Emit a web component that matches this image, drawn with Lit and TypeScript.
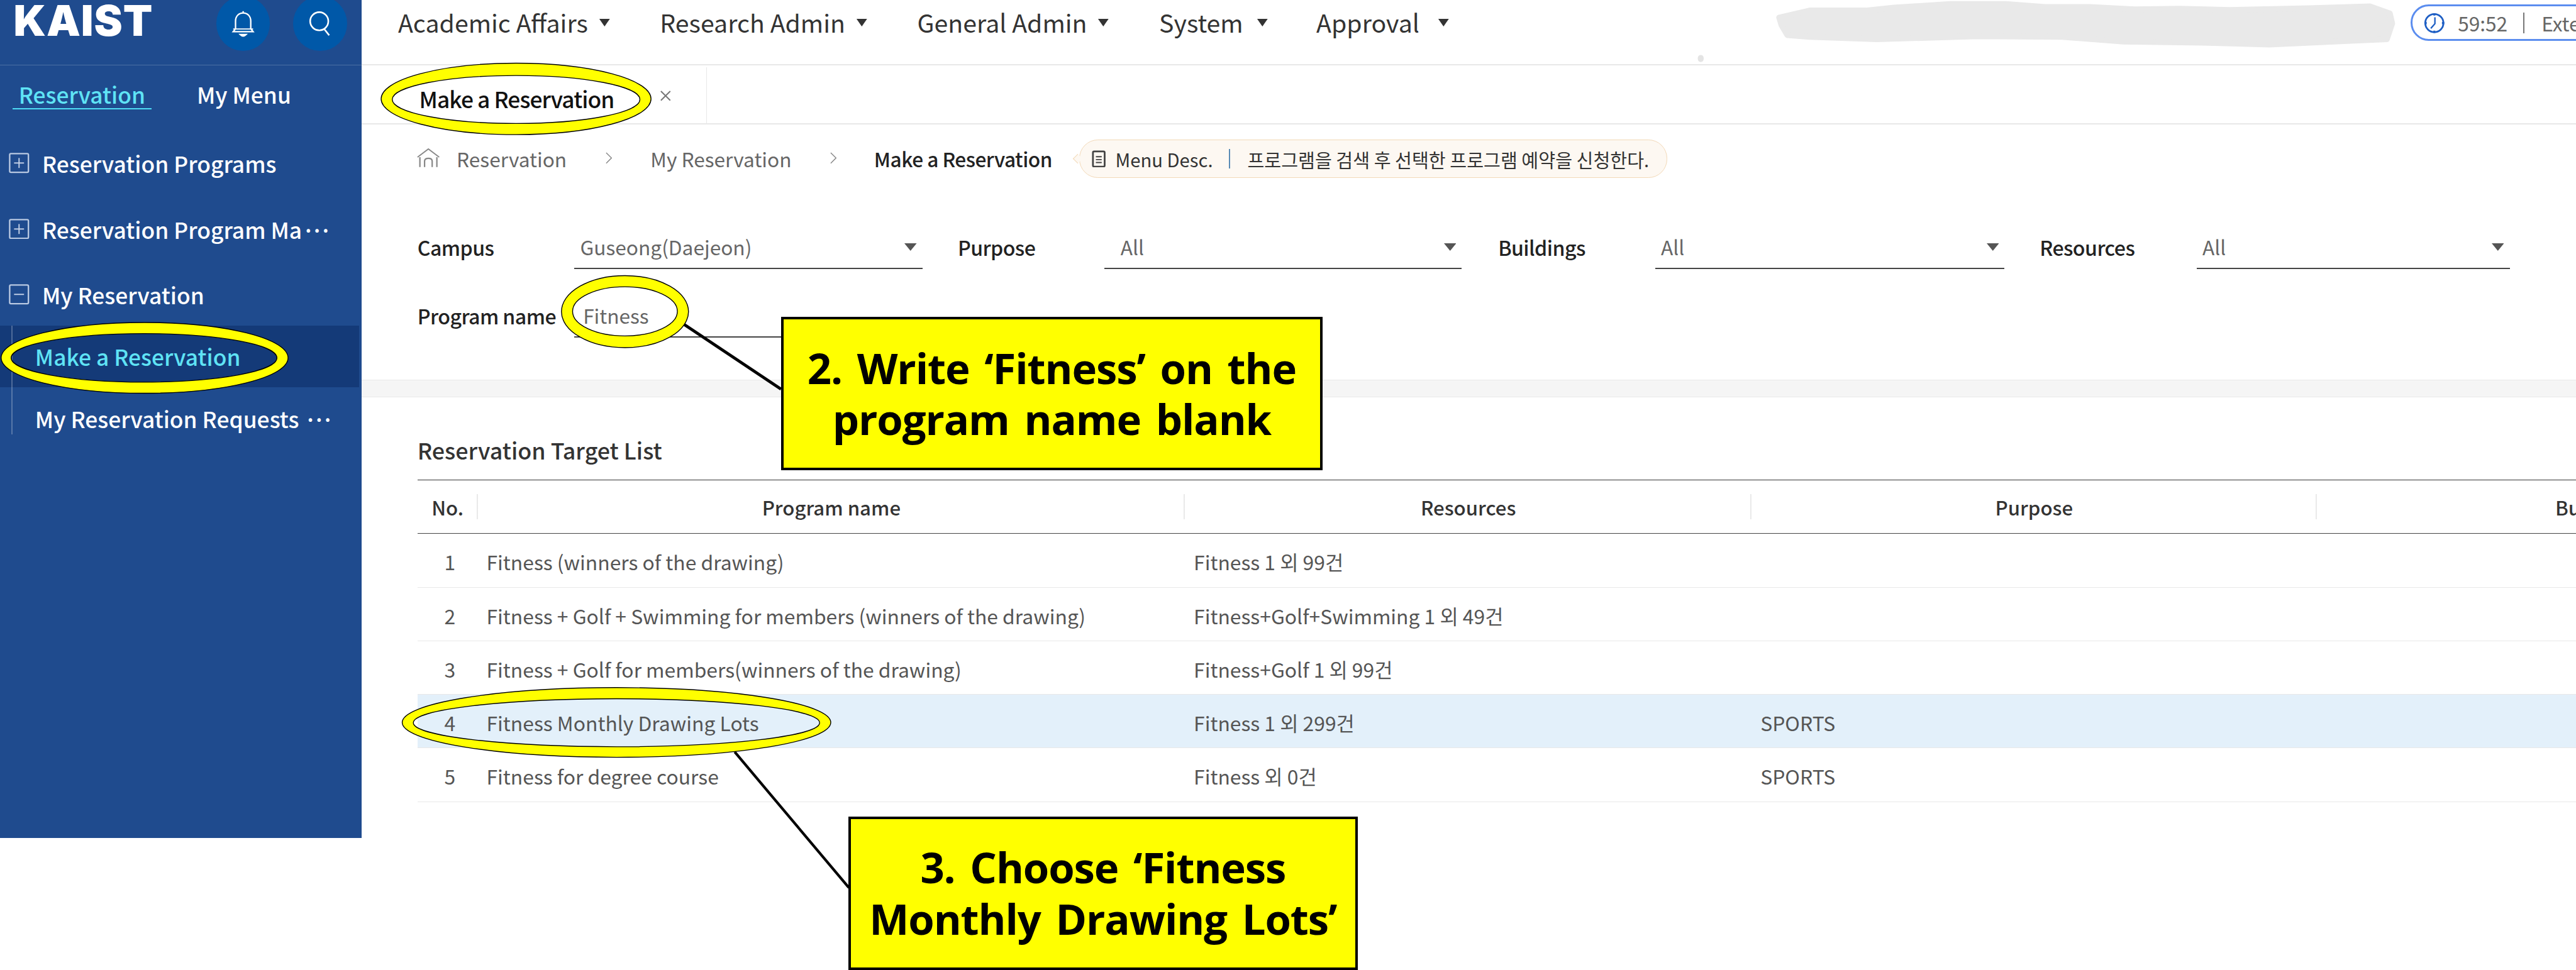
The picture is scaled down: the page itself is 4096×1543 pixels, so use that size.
import { LitElement, html, css, svg } from "lit";
import { customElement } from "lit/decorators.js";

const ring = (o: number[], i: number[]) => {
  const p = (x0: number, x1: number, y0: number, y1: number) => {
    const rx = (x1 - x0) / 2, ry = (y1 - y0) / 2, cy = (y0 + y1) / 2;
    return `M${x0} ${cy}a${rx} ${ry} 0 1 0 ${2 * rx} 0a${rx} ${ry} 0 1 0 ${-2 * rx} 0Z`;
  };
  return svg`<path class="ring" fill-rule="evenodd" d="${p(o[0], o[1], o[2], o[3])} ${p(i[0], i[1], i[2], i[3])}"></path>`;
};

const RINGS: number[][][] = [
  [[651, 1112, 108, 230], [670, 1093, 129, 211]],
  [[2, 492, 551, 672], [19, 473, 570, 653]],
  [[959, 1176, 471, 594], [978, 1157, 490, 574]],
  [[687, 1419, 1175, 1294], [706, 1400, 1194, 1276]],
];

const BLOB =
  "3039,30 3091,18 3187,18 3235,13 3331,7 3426,7 3493,12 3570,12 3646,16 3723,15 3809,17 3943,14 4048,11 4082,23 4086,40 4077,67 4010,70 3876,76 3761,73 3627,71 3522,63 3378,62 3206,67 3091,63 3053,60 3043,43";

const ROWS = [
  ["1", "Fitness (winners of the drawing)", "Fitness 1 외 99건", ""],
  ["2", "Fitness + Golf + Swimming for members (winners of the drawing)", "Fitness+Golf+Swimming 1 외 49건", ""],
  ["3", "Fitness + Golf for members(winners of the drawing)", "Fitness+Golf 1 외 99건", ""],
  ["4", "Fitness Monthly Drawing Lots", "Fitness 1 외 299건", "SPORTS"],
  ["5", "Fitness for degree course", "Fitness 외 0건", "SPORTS"],
];

const boxIcon = (open: boolean) => html`<svg class="boxicon" viewBox="0 0 35 35">
  <rect x="1.5" y="1.5" width="32" height="32" rx="2" fill="none" stroke="#b9c9e2" stroke-width="2.5"></rect>
  <path d="M9 17.5H26" stroke="#c8d5ea" stroke-width="2"></path>
  ${open ? "" : svg`<path d="M17.5 9V26" stroke="#c8d5ea" stroke-width="2"></path>`}
</svg>`;

const chevron = html`<svg class="chev" viewBox="0 0 11 20"><path d="M1 1L10 10L1 19" fill="none" stroke="#888" stroke-width="1.6"></path></svg>`;

@customElement("app-root")
export class AppRoot extends LitElement {
  static styles = css`
    :host {
      display: block;
      position: relative;
      width: 4400px;
      height: 1658px;
      zoom: 0.93091;
      overflow: hidden;
      background: #fff;
      font-family: "Noto Sans CJK KR", "Noto Sans", sans-serif;
      color: #333;
    }
    .page { display: flex; align-items: flex-start; width: 4400px; height: 1658px; }

    /* sidebar */
    .side { width: 618px; height: 1432px; flex: none; background: #1f4b8e; color: #fff; font-size: 38px; font-weight: 500; }
    .side-head { display: flex; height: 111px; border-bottom: 2px solid rgba(255,255,255,.2); box-sizing: content-box; overflow: hidden; padding-left: 23px; }
    .logo { width: 346px; flex: none; height: 70px; line-height: 70px; font-family: Inter, sans-serif; font-weight: 900; font-size: 73px; letter-spacing: 1px; }
    .circ { flex: none; width: 92px; height: 93px; margin-top: -6px; border-radius: 50%; background: #0058a8; display: flex; align-items: center; justify-content: center; }
    .circ + .circ { margin-left: 40px; }
    .stabs { display: flex; height: 111px; padding-left: 21px; gap: 66px; align-items: flex-start; box-sizing: border-box; }
    .stab { padding: 27px 11px 0; height: 46px; line-height: 46px; box-sizing: content-box; }
    .stab.on { color: #5fe3f5; border-bottom: 3px solid #4fdcf5; }
    .mitem { display: flex; align-items: center; gap: 22px; height: 112px; padding-left: 15px; white-space: nowrap; }
    .boxicon { width: 35px; height: 35px; flex: none; }
    .dots { letter-spacing: -7px; }
    .sub { position: relative; margin-top: -3px; }
    .sub::before { content: ""; position: absolute; left: 19px; top: 0; width: 2px; height: 186px; background: rgba(255,255,255,.25); }
    .sitem { display: flex; align-items: center; height: 106px; padding-left: 60px; white-space: pre; width: 613px; box-sizing: border-box; }
    .sitem.on { background: #143a78; color: #5fe3f5; }

    /* main */
    .main { flex: 1; min-width: 0; display: flex; flex-direction: column; }
    .top { display: flex; height: 110px; flex: none; border-bottom: 3px solid #e8e8e8; padding-left: 62px; overflow: hidden; }
    .nav { display: flex; align-items: flex-start; font-size: 42.2px; color: #333; white-space: nowrap; }
    .navi { display: flex; align-items: center; height: 75px; gap: 18px; margin-right: 85px; }
    .navi.sys { gap: 23px; margin-right: 82px; }
    .navi.app { gap: 31px; }
    .caret { width: 20px; height: 13px; flex: none; margin-top: 2px; }
    .timer { margin-left: auto; margin-right: -60px; margin-top: 8px; width: 343px; height: 62px; box-sizing: border-box; border: 4px solid #5b8def; border-radius: 31px; display: flex; align-items: center; padding-left: 20px; font-size: 34px; color: #666; white-space: nowrap; flex: none; overflow: hidden; }
    .clock { width: 36px; height: 36px; flex: none; margin-right: 22px; }
    .tsep { width: 2px; height: 36px; background: #777; margin: 0 29px 0 27px; flex: none; }

    .tabs { display: flex; height: 98px; flex: none; border-bottom: 3px solid #e8e8e8; }
    .tab { display: flex; align-items: center; width: 589px; margin-top: 3px; padding: 10px 0 0 98px; box-sizing: border-box; border-right: 2px solid #e8e8e8; }
    .tabt { font-size: 38px; font-weight: 500; color: #111; letter-spacing: -1px; white-space: nowrap; }
    .tabx { width: 20px; height: 18px; margin-left: 78px; margin-top: -8px; flex: none; }

    .crumb { display: flex; align-items: center; height: 116px; flex: none; padding-left: 94px; font-size: 34px; color: #666; white-space: nowrap; }
    .home { width: 39px; height: 33px; flex: none; margin-right: 29px; }
    .chev { width: 11px; height: 20px; margin: 0 66px; flex: none; }
    .cur { color: #222; font-weight: 500; letter-spacing: -.55px; margin-left: -2px; }
    .desc { display: flex; align-items: center; position: relative; margin-left: 46px; margin-top: 2px; height: 65px; width: 1005px; box-sizing: border-box; border: 2px solid #f3d9b8; border-radius: 32px; background: #fdf8f2; padding-left: 21px; font-size: 31.4px; color: #333; flex: none; }
    .desc::before { content: ""; position: absolute; left: -9px; top: 26px; width: 11px; height: 11px; transform: rotate(45deg); background: #fdf8f2; border-left: 2px solid #f3d9b8; border-bottom: 2px solid #f3d9b8; }
    .docic { width: 24px; height: 30px; margin-right: 16px; flex: none; }
    .dsep { width: 2px; height: 33px; background: #5a8bb5; margin: 0 30px 0 27px; flex: none; }

    .filters { padding: 61px 0 72px 95px; flex: none; }
    .frow { display: flex; }
    .frow + .frow { margin-top: 46px; }
    .field { display: flex; align-items: center; width: 923px; padding-right: 60px; box-sizing: border-box; flex: none; }
    .field.n { padding-right: 62px; }
    .field.b { width: 925px; }
    .field.l { width: 863px; }
    .lbl { width: 268px; flex: none; font-size: 34.5px; font-weight: 500; color: #222; letter-spacing: -.6px; white-space: nowrap; margin-top: -6px; }
    .lbl.n { width: 250px; }
    .sel { flex: 1; height: 71px; box-sizing: border-box; border-bottom: 3px solid #444; display: flex; align-items: center; justify-content: space-between; padding: 0 10px 6px; font-size: 34px; color: #666; }
    .sel.inp { padding-left: 15px; }
    .field.n .sel { padding-left: 28px; }
    .tri { width: 21px; height: 13px; flex: none; margin-top: 4px; }

    .band { height: 30px; flex: none; box-sizing: border-box; background: #f5f5f5; border-top: 2px solid #e8e8e8; border-bottom: 2px solid #e8e8e8; }
    .list { padding-left: 95px; flex: none; }
    .ltitle { height: 140px; padding-top: 63px; box-sizing: border-box; line-height: 52px; font-size: 38.5px; font-weight: 500; color: #333; }
    table { border-collapse: separate; border-spacing: 0; table-layout: fixed; width: 4209px; border-top: 2px solid #333; }
    th { height: 92px; padding: 1px 0 0; box-sizing: border-box; font-size: 33.5px; font-weight: 500; color: #333; border-bottom: 2px solid #444; background: linear-gradient(#e8e8e8, #e8e8e8) right center / 2px 43px no-repeat; }
    td { height: 91.6px; padding: 4px 0 0 15px; box-sizing: border-box; font-size: 34.2px; color: #555; border-bottom: 2px solid #e8e8e8; white-space: nowrap; }
    td.num { text-align: center; padding: 4px 0 0 8px; }
    tr.hl td { background: #e3f0fa; }

    /* annotations */
    .over { position: absolute; left: 0; top: 0; width: 4400px; height: 1658px; pointer-events: none; }
    .ring { fill: #ffff00; stroke: #000; stroke-width: 1.5; }
    .blob { fill: #e9e9e9; stroke: #e9e9e9; stroke-width: 10; stroke-linejoin: round; }
    .call { position: absolute; box-sizing: border-box; border: 5px solid #000; background: #ffff00; color: #000; font-family: "Open Sans", sans-serif; font-weight: 700; font-size: 72px; text-align: center; display: flex; flex-direction: column; justify-content: center; white-space: nowrap; letter-spacing: -1.2px; word-spacing: 8px; }
    .c2 { left: 1334px; top: 541px; width: 925px; height: 262px; line-height: 87px; }
    .c3 { left: 1449px; top: 1395px; width: 870px; height: 262px; line-height: 88px; }
  `;

  render() {
    return html`
      <div class="page">
        <aside class="side">
          <div class="side-head">
            <div class="logo">KAIST</div>
            <div class="circ">
              <svg width="40" height="48" viewBox="0 0 40 48" fill="none" stroke="#fff" stroke-width="2.5">
                <path d="M20 3v3M7 33V20C7 11 13 6 20 6s13 5 13 14v13l4 5H3Z"></path>
                <path d="M3 33.5h34" stroke-width="2"></path>
                <path d="M15 43h10q-5 5-10 0Z" fill="#fff"></path>
              </svg>
            </div>
            <div class="circ">
              <svg width="44" height="44" viewBox="0 0 44 44" fill="none" stroke="#fff" stroke-width="2.8">
                <ellipse cx="20" cy="18" rx="15.5" ry="15.5"></ellipse>
                <path d="M29 32L37 42"></path>
              </svg>
            </div>
          </div>
          <div class="stabs"><div class="stab on">Reservation</div><div class="stab">My Menu</div></div>
          <div class="mitem">${boxIcon(false)}<span>Reservation Programs</span></div>
          <div class="mitem">${boxIcon(false)}<span>Reservation Program Ma<span class="dots">···</span></span></div>
          <div class="mitem">${boxIcon(true)}<span>My Reservation</span></div>
          <div class="sub">
            <div class="sitem on">Make a Reservation</div>
            <div class="sitem"><span>My Reservation Requests <span class="dots">···</span></span></div>
          </div>
        </aside>

        <main class="main">
          <div class="top">
            <nav class="nav">
              ${[["Academic Affairs", ""], ["Research Admin", ""], ["General Admin", ""], ["System", "sys"], ["Approval", "app"]].map(
                ([t, c]) => html`<div class="navi ${c}"><span>${t}</span>
                  <svg class="caret" viewBox="0 0 20 13"><path d="M1 0H19L10 13Z" fill="#333"></path></svg></div>`
              )}
            </nav>
            <div class="timer">
              <svg class="clock" viewBox="0 0 36 36" fill="none" stroke="#1f5fc4" stroke-width="3">
                <circle cx="18" cy="18" r="15.5"></circle>
                <path d="M19 8V19L12 27" stroke-width="2.5"></path>
                <path d="M18 1v4M18 31v4M1 18h4M31 18h4" stroke-width="3.5"></path>
              </svg>
              <span>59:52</span><span class="tsep"></span><span>Extend</span>
            </div>
          </div>

          <div class="tabs">
            <div class="tab">
              <span class="tabt">Make a Reservation</span>
              <svg class="tabx" viewBox="0 0 20 18"><path d="M2 1L18 17M18 1L2 17" stroke="#777" stroke-width="2.2"></path></svg>
            </div>
          </div>

          <div class="crumb">
            <svg class="home" viewBox="0 0 39 33" fill="none" stroke="#888" stroke-width="2">
              <path d="M1 15L19.5 1L38 15"></path>
              <path d="M5 15V32M34 15V32M13 32V22q0-5 6.5-5t6.5 5V32" stroke-width="2.4"></path>
            </svg>
            <span>Reservation</span>${chevron}<span>My Reservation</span>${chevron}<span class="cur">Make a Reservation</span>
            <div class="desc">
              <svg class="docic" viewBox="0 0 24 30" fill="none" stroke="#444" stroke-width="3">
                <rect x="2" y="2" width="20" height="26" rx="2"></rect>
                <path d="M7 11h10M7 16h10M7 21h10" stroke-width="2"></path>
              </svg>
              <span>Menu Desc.</span><span class="dsep"></span><span>프로그램을 검색 후 선택한 프로그램 예약을 신청한다.</span>
            </div>
          </div>

          <div class="filters">
            <div class="frow">
              ${[["Campus", "Guseong(Daejeon)", ""], ["Purpose", "All", "n"], ["Buildings", "All", "b"], ["Resources", "All", "l"]].map(
                ([l, v, c]) => html`<div class="field ${c}">
                  <span class="lbl ${c === "n" ? "n" : ""}">${l}</span>
                  <div class="sel"><span>${v}</span>
                    <svg class="tri" viewBox="0 0 21 13"><path d="M0 0H21L10.5 13Z" fill="#555"></path></svg></div>
                </div>`
              )}
            </div>
            <div class="frow">
              <div class="field"><span class="lbl">Program name</span><div class="sel inp"><span>Fitness</span></div></div>
            </div>
          </div>

          <div class="band"></div>

          <section class="list">
            <div class="ltitle">Reservation Target List</div>
            <table>
              <colgroup><col style="width:103px" /><col style="width:1208px" /><col style="width:968px" /><col style="width:965px" /><col style="width:965px" /></colgroup>
              <thead><tr><th>No.</th><th>Program name</th><th>Resources</th><th>Purpose</th><th>Buildings</th></tr></thead>
              <tbody>
                ${ROWS.map(
                  (r) => html`<tr class="${r[0] === "4" ? "hl" : ""}">
                    <td class="num">${r[0]}</td><td>${r[1]}</td><td>${r[2]}</td><td>${r[3]}</td><td></td>
                  </tr>`
                )}
              </tbody>
            </table>
          </section>
        </main>
      </div>

      <svg class="over" viewBox="0 0 4400 1658">
        <polygon class="blob" points="${BLOB}"></polygon>
        <rect x="2900" y="94" width="10" height="12" rx="5" fill="#e4e4e4"></rect>
        <path d="M1168 554L1334 665" stroke="#000" stroke-width="5" fill="none"></path>
        <path d="M1255 1285L1450 1517" stroke="#000" stroke-width="4.5" fill="none"></path>
        ${RINGS.map((r) => ring(r[0], r[1]))}
      </svg>
      <div class="call c2"><div>2. Write ‘Fitness’ on the</div><div>program name blank</div></div>
      <div class="call c3"><div>3. Choose ‘Fitness</div><div>Monthly Drawing Lots’</div></div>
    `;
  }
}
